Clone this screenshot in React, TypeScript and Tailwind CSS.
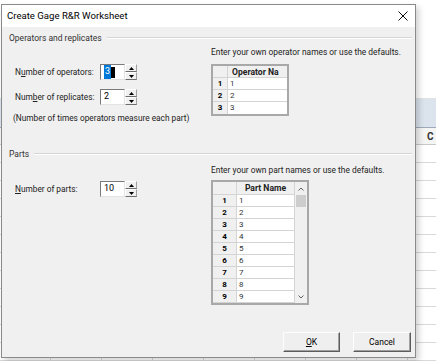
import type { ReactNode } from "react";

const ui = "font-['Roboto',sans-serif]";
const sheetCols = Array.from({ length: 9 });
const sheetRows = Array.from({ length: 12 });

function SpinButton({ up }: { up?: boolean }) {
  return (
    <div className="flex h-[8px] w-[12px] items-center justify-center border border-t-white border-l-white border-r-[#a0a0a0] border-b-[#6d6d6d] bg-[#f0f0f0]">
      <svg width="5" height="3" viewBox="0 0 5 3">
        {up ? <path d="M2.5 0 L5 3 L0 3 Z" fill="#000" /> : <path d="M0 0 L5 0 L2.5 3 Z" fill="#000" />}
      </svg>
    </div>
  );
}

function NumberField({ children }: { children: ReactNode }) {
  return (
    <div className="flex h-[16px]">
      <div className="flex w-[25px] items-center border border-t-[#7a7a7a] border-l-[#7a7a7a] border-b-[#e3e3e3] border-r-[#e3e3e3] bg-white pl-[3px] text-[9px] text-black">
        {children}
      </div>
      <div className="flex flex-col">
        <SpinButton up />
        <SpinButton />
      </div>
    </div>
  );
}

function SectionHeader({ title }: { title: string }) {
  return (
    <div className="flex h-[14px] items-center gap-[5px]">
      <span className="whitespace-nowrap text-[8.5px] text-[#333]">{title}</span>
      <div className="h-[2px] flex-1 border-t border-t-[#d5d5d5] border-b border-b-white" />
    </div>
  );
}

function Field({ label, children }: { label: ReactNode; children: ReactNode }) {
  return (
    <div className="flex h-[16px] items-center">
      <span className="w-[85px] whitespace-nowrap text-[8.3px] text-[#222]">{label}</span>
      {children}
    </div>
  );
}

function OperatorTable() {
  return (
    <div className="w-[78px] border-2 border-[#a8a8a8] bg-white text-[8px]">
      <div className="grid h-[12px] grid-cols-[15px_1fr] border-b border-[#d4d4d4] bg-[#f0f0f0]">
        <div className="border-r border-[#d4d4d4]" />
        <div className="overflow-hidden whitespace-nowrap pl-[4px] text-[8.6px] font-bold leading-[12px] text-[#222]">Operator Na</div>
      </div>
      {["1", "2", "3"].map((n, i) => (
        <div key={n} className={`grid h-[12px] grid-cols-[15px_1fr] ${i < 2 ? "border-b border-[#d4d4d4]" : ""}`}>
          <div className="border-r border-[#d4d4d4] bg-[#f0f0f0] text-center font-bold leading-[11px] text-black">{n}</div>
          <div className="pl-[2px] leading-[11px] text-[#333]">{n}</div>
        </div>
      ))}
    </div>
  );
}

function PartsTable() {
  const rows = ["1", "2", "3", "4", "5", "6", "7", "8", "9"];
  return (
    <div className="flex w-[98px] border-2 border-[#a8a8a8] bg-white text-[8px]">
      <div className="flex-1">
        <div className="grid h-[13px] grid-cols-[24px_1fr] border-b border-[#d4d4d4] bg-[#f0f0f0]">
          <div className="border-r border-[#d4d4d4]" />
          <div className="border-r border-[#d4d4d4] text-center text-[8.6px] font-bold leading-[12px] text-[#222]">Part Name</div>
        </div>
        {rows.map((n) => (
          <div key={n} className="grid h-[12px] grid-cols-[24px_1fr] border-b border-[#d4d4d4]">
            <div className="border-r border-[#d4d4d4] bg-[#f0f0f0] text-center font-bold leading-[11px] text-black">{n}</div>
            <div className="border-r border-[#d4d4d4] pl-[2px] leading-[11px] text-[#333]">{n}</div>
          </div>
        ))}
      </div>
      <div className="flex w-[12px] flex-col bg-[#f0f0f0]">
        <div className="flex h-[13px] items-center justify-center">
          <svg width="6" height="4" viewBox="0 0 6 4"><path d="M0.5 3.5 L3 1 L5.5 3.5" fill="none" stroke="#606060" strokeWidth="1" /></svg>
        </div>
        <div className="flex-1">
          <div className="mx-auto h-[12px] w-[10px] bg-[#cdcdcd]" />
        </div>
        <div className="flex h-[12px] items-center justify-center">
          <svg width="6" height="4" viewBox="0 0 6 4"><path d="M0.5 0.5 L3 3 L5.5 0.5" fill="none" stroke="#606060" strokeWidth="1" /></svg>
        </div>
      </div>
    </div>
  );
}

function DialogButton({ children, width }: { children: ReactNode; width: string }) {
  return (
    <button
      type="button"
      className={`flex h-[20px] ${width} items-center justify-center border border-t-[#fdfdfd] border-l-[#fdfdfd] border-r-[#5c5c5c] border-b-[#5c5c5c] bg-[#efefef] text-[8.5px] text-black shadow-[inset_-1px_-1px_0_#a0a0a0]`}
    >
      {children}
    </button>
  );
}

export default function App() {
  return (
    <div className={`relative h-[361px] w-[436px] overflow-hidden bg-white ${ui}`}>
      {/* spreadsheet behind the dialog */}
      <div className="absolute inset-0 flex flex-col">
        <div className="h-[103px] border-b border-[#e2e2e2] bg-white" />
        <div className="h-[30px] border-b border-[#9eaabb] bg-[#dbe3ec]" />
        <div className="flex h-[17px] border-b border-[#c8c8c8] bg-[#f4f4f4]">
          <div className="w-[408px]" />
          <div className="flex-1 pl-[19px] text-[10px] font-bold leading-[17px] text-[#333]">C</div>
        </div>
        {sheetRows.map((_, r) => (
          <div key={r} className="flex h-[18px] shrink-0 border-b border-[#d9d9d9]">
            {sheetCols.map((_, c) => (
              <div key={c} className="w-[51px] shrink-0 border-r border-[#d9d9d9]" />
            ))}
          </div>
        ))}
      </div>

      {/* dialog window */}
      <div className="absolute left-[1px] top-[4px] flex h-[354px] w-[415px] flex-col border border-[#8a8a8a] shadow-[3px_3px_6px_rgba(0,0,0,0.18)]">
        <div className="flex h-[22px] items-center justify-between bg-white pl-[5px] pr-[7px]">
          <span className="text-[9.6px] text-black">Create Gage R&amp;R Worksheet</span>
          <svg width="10" height="10" viewBox="0 0 10 10">
            <path d="M0.5 0.5 L9.5 9.5 M9.5 0.5 L0.5 9.5" stroke="#111" strokeWidth="1" />
          </svg>
        </div>

        <div className="flex flex-1 flex-col bg-[#f0f0f0] pl-[7px] pr-[3px]">
          <div className="mt-[4px]">
            <SectionHeader title="Operators and replicates" />
          </div>

          <div className="flex">
            <div className="flex w-[202px] flex-col pl-[6px] pt-[19px]">
              <Field label={<>N<u>u</u>mber of operators:</>}>
                <NumberField>
                  <span className="flex h-[11px] items-center">
                    <span className="bg-[#0078d7] px-[1px] text-white">3</span>
                    <span className="h-[11px] w-[4px] bg-black" />
                  </span>
                </NumberField>
              </Field>
              <div className="mt-[9px]">
                <Field label={<>Num<u>b</u>er of replicates:</>}>
                  <NumberField>2</NumberField>
                </Field>
              </div>
              <div className="-ml-[2px] mt-[7px] flex h-[12px] items-center whitespace-nowrap text-[8.3px] text-[#222]">
                (Number of times operators measure each part)
              </div>
            </div>
            <div className="flex flex-col">
              <div className="mt-[1px] flex h-[12px] items-center whitespace-nowrap text-[8.4px] text-[#222]">
                Enter your own operator names or use the defaults.
              </div>
              <div className="mt-[6px]">
                <OperatorTable />
              </div>
            </div>
          </div>

          <div className="mt-[23px]">
            <SectionHeader title="Parts" />
          </div>

          <div className="flex">
            <div className="flex w-[202px] flex-col pl-[6px] pt-[20px]">
              <Field label={<><u>N</u>umber of parts:</>}>
                <NumberField>10</NumberField>
              </Field>
            </div>
            <div className="flex flex-col">
              <div className="mt-[3px] flex h-[12px] items-center whitespace-nowrap text-[8.4px] text-[#222]">
                Enter your own part names or use the defaults.
              </div>
              <div className="mt-[4px]">
                <PartsTable />
              </div>
            </div>
          </div>

          <div className="mt-[27px] flex justify-end gap-[13px] pr-[1px]">
            <DialogButton width="w-[57px]"><span><u>O</u>K</span></DialogButton>
            <DialogButton width="w-[58px]">Cancel</DialogButton>
          </div>
        </div>
      </div>
    </div>
  );
}
